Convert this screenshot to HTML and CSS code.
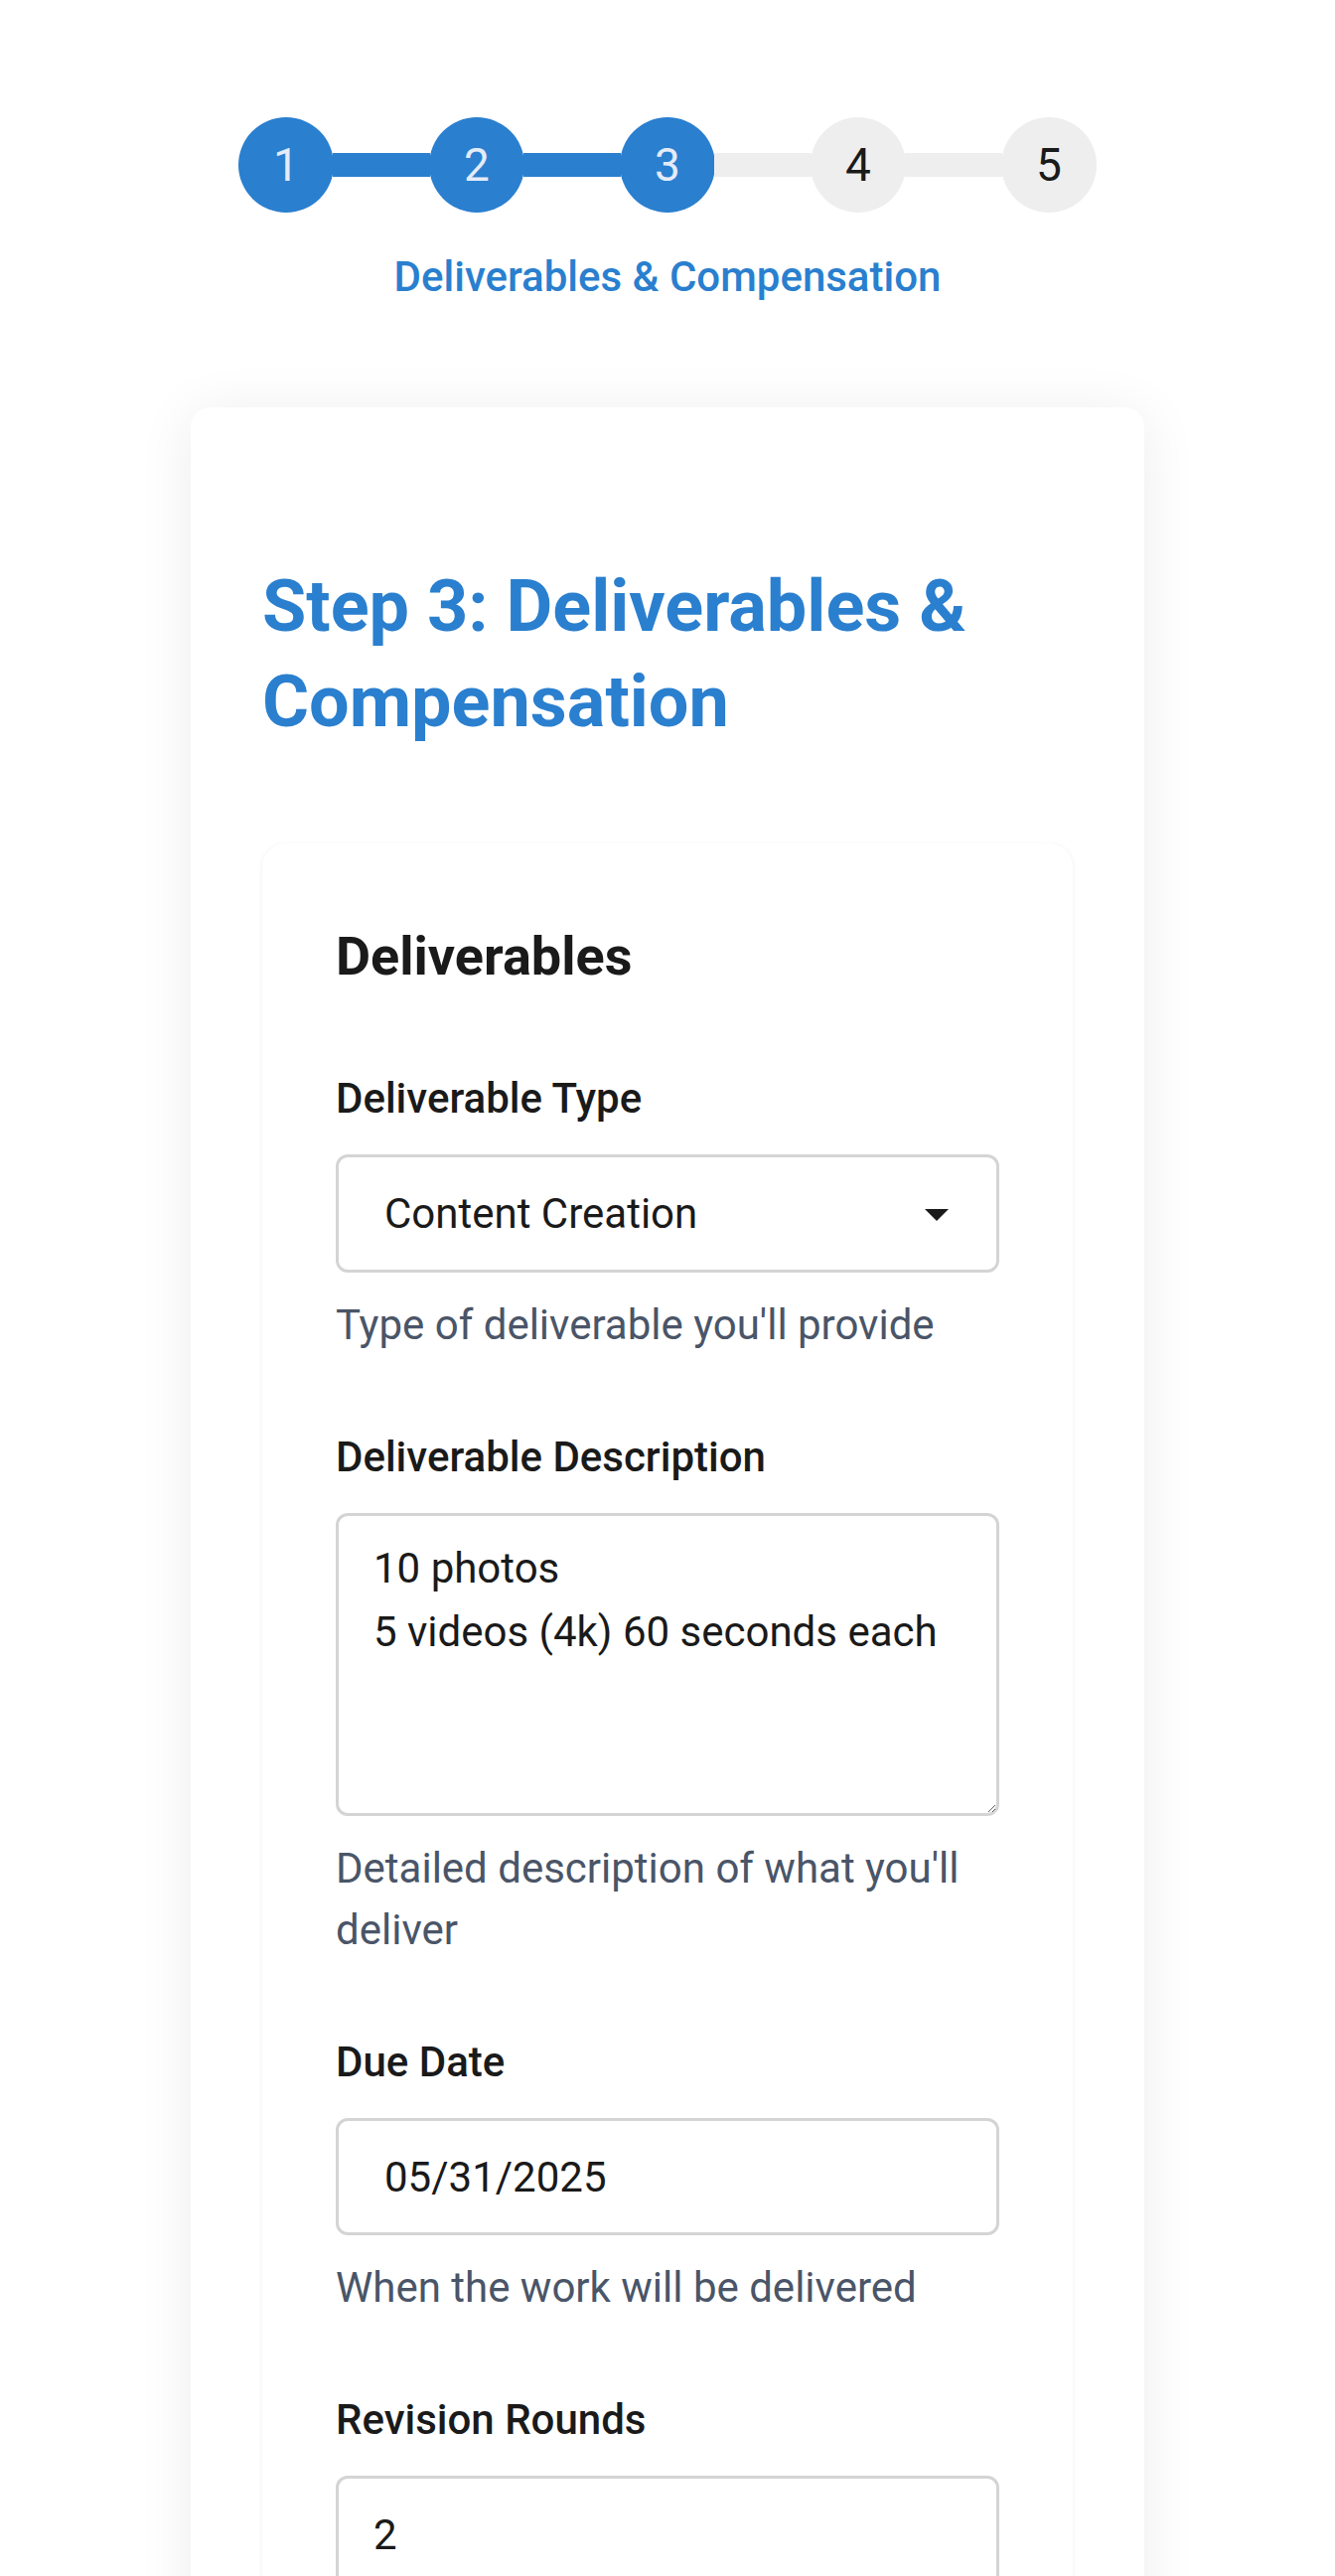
FILE: index.html
```html
<!DOCTYPE html>
<html lang="en">
<head>
<meta charset="utf-8">
<title>Step 3: Deliverables &amp; Compensation</title>
<link rel="stylesheet" href="styles.css">
</head>
<body>
<div class="page">
  <div class="stepper">
    <div class="steps">
      <div class="step done">1</div>
      <div class="connector done"></div>
      <div class="step done">2</div>
      <div class="connector done"></div>
      <div class="step done">3</div>
      <div class="connector"></div>
      <div class="step">4</div>
      <div class="connector"></div>
      <div class="step">5</div>
    </div>
    <div class="step-label">Deliverables &amp; Compensation</div>
  </div>

  <div class="card">
    <h1 class="card-title">Step 3: Deliverables &amp; Compensation</h1>

    <section class="section">
      <h2 class="section-title">Deliverables</h2>

      <div class="field">
        <label class="field-label">Deliverable Type</label>
        <div class="select-wrap">
          <select class="control select">
            <option>Content Creation</option>
          </select>
        </div>
        <p class="helper">Type of deliverable you'll provide</p>
      </div>

      <div class="field">
        <label class="field-label">Deliverable Description</label>
        <textarea class="control textarea">10 photos
5 videos (4k) 60 seconds each</textarea>
        <p class="helper">Detailed description of what you'll deliver</p>
      </div>

      <div class="field">
        <label class="field-label">Due Date</label>
        <input class="control input date" type="text" value="05/31/2025">
        <p class="helper">When the work will be delivered</p>
      </div>

      <div class="field">
        <label class="field-label">Revision Rounds</label>
        <input class="control input number" type="text" value="2">
        <p class="helper">Number of revision rounds included</p>
      </div>
    </section>
  </div>
</div>
</body>
</html>
```

FILE: styles.css
```css
* {
  box-sizing: border-box;
}

html, body {
  margin: 0;
  padding: 0;
  background: #ffffff;
}

body {
  font-family: Roboto, "Noto Sans", "Liberation Sans", sans-serif;
  color: #1a1a1a;
}

.page {
  padding-top: 118px;
  padding-bottom: 200px;
}

/* Stepper */
.stepper {
  display: flex;
  flex-direction: column;
  align-items: center;
}

.steps {
  display: flex;
  align-items: center;
}

.step {
  width: 96px;
  height: 96px;
  border-radius: 50%;
  background: #eeeeee;
  color: #1a1a1a;
  display: flex;
  align-items: center;
  justify-content: center;
  font-size: 46px;
  font-weight: 400;
  flex: none;
}

.step.done {
  background: #2a7fcf;
  color: #e4ebf9;
}

.connector {
  width: 98px;
  height: 24px;
  background: #eeeeee;
  flex: none;
  margin: 0 -1px;
}

.connector.done {
  background: #2a7fcf;
}

.step-label {
  margin-top: 33px;
  font-size: 42px;
  line-height: 63px;
  font-weight: 500;
  color: #2a7fcf;
}

/* Card */
.card {
  width: 960px;
  margin: 100px auto 0;
  padding: 153px 72px 72px;
  background: #ffffff;
  border-radius: 20px;
  box-shadow: 0 6px 56px rgba(0, 0, 0, 0.08);
}

.card-title {
  margin: 0 0 94px;
  font-size: 72px;
  line-height: 96px;
  font-weight: 700;
  color: #2a7fcf;
}

.section {
  padding: 79px 74px 74px;
  border-radius: 24px;
  background: #ffffff;
  box-shadow: 0 1px 5px rgba(0, 0, 0, 0.07);
}

.section-title {
  margin: 0 0 78px;
  font-size: 54px;
  line-height: 70px;
  font-weight: 700;
  color: #1a1a1a;
}

.field {
  margin-bottom: 72px;
}

.field-label {
  display: block;
  margin-bottom: 26px;
  font-size: 42px;
  line-height: 60px;
  font-weight: 500;
  color: #1a1a1a;
}

.control {
  display: block;
  width: 100%;
  margin: 0;
  border: 3px solid #d4d4d4;
  border-radius: 12px;
  background: #ffffff;
  font-family: Roboto, "Noto Sans", "Liberation Sans", sans-serif;
  font-size: 42px;
  color: #1a1a1a;
  outline: none;
}

.select-wrap {
  position: relative;
}

.select-wrap::after {
  content: "";
  position: absolute;
  right: 51px;
  top: 50%;
  margin-top: -5px;
  width: 0;
  height: 0;
  border-left: 12px solid transparent;
  border-right: 12px solid transparent;
  border-top: 12px solid #1a1a1a;
  pointer-events: none;
}

.select {
  height: 119px;
  padding: 0 90px 0 46px;
  -webkit-appearance: none;
  appearance: none;
}

.textarea {
  height: 305px;
  padding: 21px 35px;
  line-height: 64px;
  resize: vertical;
}

.input {
  height: 118px;
}

.input.date {
  padding: 0 35px 0 46px;
}

.input.number {
  padding: 0 35px;
}

.helper {
  margin: 22px 0 0;
  font-size: 42px;
  line-height: 62px;
  color: #4a5568;
}
```
